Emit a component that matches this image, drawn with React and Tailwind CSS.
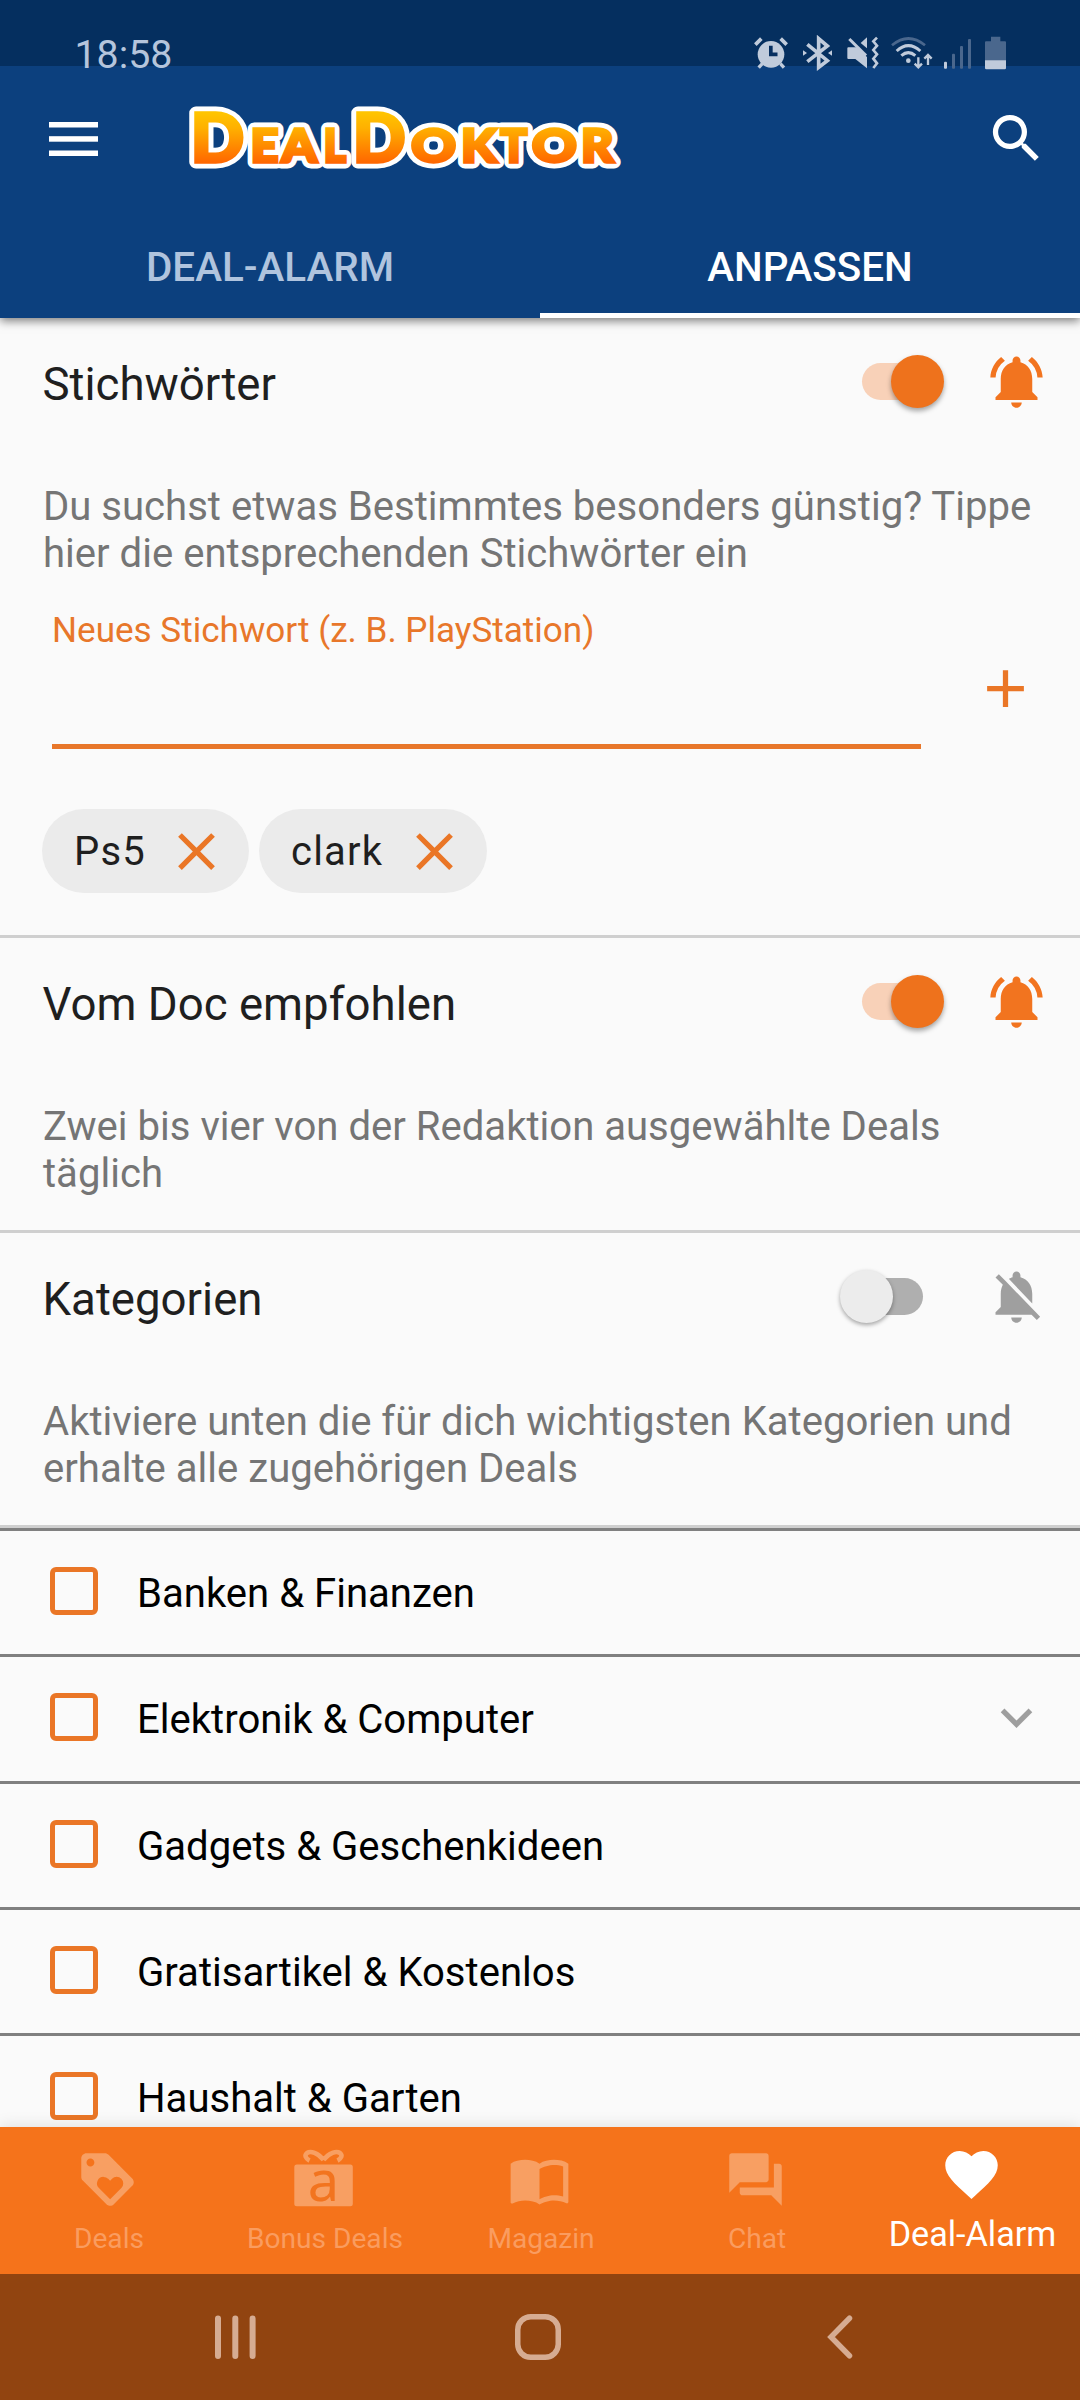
import React from "react";
import {
  MdNotificationsActive,
  MdNotificationsOff,
  MdSearch,
  MdAdd,
  MdClose,
  MdExpandMore,
  MdLoyalty,
  MdImportContacts,
  MdForum,
  MdFavorite,
} from "react-icons/md";

const BRIGHT = "#c0cbdb";
const DIM = "#4a678d";

function StatusGlyph({ x, w, children, className }) {
  return (
    <svg
      width={w / 3}
      height="36"
      viewBox={`${x} 44 ${w} 108`}
      className={className}
      fill="none"
      stroke={BRIGHT}
    >
      {children}
    </svg>
  );
}

function StatusIcons() {
  return (
    <div className="flex h-9">
      <StatusGlyph x={42} w={144}>
        <circle cx="93" cy="102" r="40" fill={BRIGHT} stroke="none" />
        <path d="M67 130 56 142M121 130l11 12" strokeWidth="10" />
        <path d="M46 73 64 55M122 55l18 18" strokeWidth="11" />
        <path d="M92.500 76v26h20" strokeWidth="11" stroke="#062f60" />
      </StatusGlyph>
      <StatusGlyph x={186} w={132}>
        <path d="M202 72 262 121 236 141V55L262 77 202 124" strokeWidth="11" />
        <path d="M189 90l12 8-12 8zM276 90l-12 8 12 8z" fill={BRIGHT} stroke="none" />
      </StatusGlyph>
      <StatusGlyph x={318} w={132}>
        <path d="M322 84q0-3 3-3h24L381 110v34L346 116h-21q-3 0-3-3z" fill={BRIGHT} stroke="none" />
        <path d="M381 51v33L362 68z" fill={BRIGHT} stroke="none" />
        <path d="M328 56 378 106" strokeWidth="9" />
        <path d="M411 52 400 63 411 76 400 89 411 102 400 115 411 129 400 143" strokeWidth="8" />
      </StatusGlyph>
      <StatusGlyph x={450} w={156}>
        <path d="M456 75Q505 34 555 75" strokeWidth="8" stroke={DIM} />
        <path d="M470 92Q505 60 541 92M484 106Q505 88 526 106" strokeWidth="9" />
        <circle cx="505" cy="121" r="7" fill={BRIGHT} stroke="none" />
        <path d="M535 111v28M524 130l11 11 11-11M564 134v-28M553 115l11-11 11 11" strokeWidth="7" />
      </StatusGlyph>
      <StatusGlyph x={606} w={120}>
        <g stroke="none" fill={DIM}>
          <rect x="612" y="124" width="9" height="21" rx="3" fill={BRIGHT} />
          <rect x="636" y="100" width="9" height="45" rx="3" />
          <rect x="660" y="77" width="9" height="68" rx="3" />
          <rect x="684" y="56" width="9" height="89" rx="3" />
        </g>
      </StatusGlyph>
      <StatusGlyph x={726} w={78}>
        <path d="M753 63V49h28v14h14q3 0 3 3v55h-63V66q0-3 3-3z" fill={DIM} stroke="none" />
        <path d="M735 120h63v23q0 4-4 4h-55q-4 0-4-4z" fill={BRIGHT} stroke="none" />
      </StatusGlyph>
    </div>
  );
}

/* letter, left edge, right edge, font size */
const LOGO = [
  ["D", 193.5, 244, 66],
  ["E", 252, 278.7, 45.5],
  ["A", 279.3, 319.3, 45.5],
  ["L", 324.7, 347.3, 45.5],
  ["D", 355.3, 405.3, 66],
  ["O", 411.3, 456, 46.5],
  ["K", 462.7, 499.3, 45.5],
  ["T", 498.7, 528.3, 45.5],
  ["O", 532, 576.7, 46.5],
  ["R", 582.7, 615.5, 45.5],
];

function Logo() {
  const ctx = document.createElement("canvas").getContext("2d");
  const letters = LOGO.map(([char, left, right, size]) => {
    ctx.font = `900 ${size * 10}px Lato`;
    const m = ctx.measureText(char);
    const inkLeft = -m.actualBoundingBoxLeft / 10;
    const ink = m.actualBoundingBoxRight / 10 - inkLeft;
    const sx = (right - left - 3.4) / ink;
    return { char, size, transform: `translate(${left + 1.7 - inkLeft * sx} 162.200) scale(${sx} 1)` };
  });
  const draw = (props) =>
    letters.map((l, i) => (
      <text key={i} transform={l.transform} fontSize={l.size} {...props}>
        {l.char}
      </text>
    ));
  return (
    <svg width="440" height="110" viewBox="185 84 440 110" fontFamily="Lato" fontWeight="900" strokeLinejoin="round">
      <defs>
        <linearGradient id="logoFill" gradientUnits="userSpaceOnUse" x1="0" x2="0" y1="-49" y2="1">
          <stop offset="0" stopColor="#ffc400" />
          <stop offset="0.3" stopColor="#ffb000" />
          <stop offset="1" stopColor="#ff6600" />
        </linearGradient>
      </defs>
      {draw({ fill: "#fff", stroke: "#fff", strokeWidth: 12.8 })}
      {draw({ fill: "url(#logoFill)", stroke: "url(#logoFill)", strokeWidth: 3.4, strokeLinejoin: "miter" })}
    </svg>
  );
}

function Header() {
  return (
    <header className="relative z-10 h-[318px] bg-[#0c407e] bg-[linear-gradient(#052f5f_66px,transparent_66px)] shadow-[0_3px_9px_rgba(0,0,0,0.5)]">
      <div className="flex h-[70px] items-start justify-between pl-[74.5px] pr-[72px]">
        <span className="pt-[30px] text-[39.3px] leading-[50px] text-[#b5c5dc]">18:58</span>
        <div className="pt-[34.700px]">
          <StatusIcons />
        </div>
      </div>
      <div className="flex h-[138px] items-start pl-[48.5px] pr-[32px]">
        <svg width="49" height="34" viewBox="0 0 49 34" className="mt-[52px]" fill="#fff">
          <rect width="49" height="5.500" />
          <rect y="14.200" width="49" height="5.500" />
          <rect y="28.500" width="49" height="5.500" />
        </svg>
        <div className="ml-[87.5px] mt-[14px]">
          <Logo />
        </div>
        <MdSearch className="ml-auto mt-[37px] size-[63px] text-white" />
      </div>
      <nav className="flex h-[110px] text-center text-[40.4px] font-medium leading-[50px]">
        <div className="flex-1 pt-[35px] text-[#b0c4de]">DEAL-ALARM</div>
        <div className="flex-1 border-b-[5px] border-white pt-[35px] text-white">ANPASSEN</div>
      </nav>
    </header>
  );
}

function Toggle({ on }) {
  return (
    <div
      className={
        on
          ? "relative h-[37px] w-[61px] rounded-full bg-[#f8d1b8]"
          : "relative h-[37px] w-[61px] rounded-full bg-[#afafaf]"
      }
    >
      <div
        className={
          on
            ? "absolute -top-2 left-[29px] size-[53px] rounded-full bg-[#ee721c] shadow-[0_3px_5px_rgba(0,0,0,0.35)]"
            : "absolute -top-2 left-[-22px] size-[53px] rounded-full bg-[#ececec] shadow-[0_2px_4px_rgba(0,0,0,0.35)]"
        }
      />
    </div>
  );
}

function Section({ title, text, on, children, className }) {
  return (
    <section className={`border-b-[3px] border-[#cfcfcf] ${className}`}>
      <div className="flex h-[127px] items-center pl-[42.5px] pr-[32px]">
        <h2 className="flex-1 pt-[7px] text-[45.6px] leading-[54px] text-[#1f1f1f]">{title}</h2>
        <Toggle on={on} />
        {on ? (
          <MdNotificationsActive className="ml-[62px] size-[63px] text-[#f2741f]" />
        ) : (
          <MdNotificationsOff className="ml-[62px] size-[63px] text-[#9f9f9f]" />
        )}
      </div>
      <p className="mt-[39px] whitespace-pre-line pl-[43px] text-[40.1px] leading-[46.7px] text-[#757575]">{text}</p>
      {children}
    </section>
  );
}

function Chip({ label, className }) {
  return (
    <div className={`flex h-[84px] items-center justify-between rounded-full bg-[#ebebeb] pl-[32px] pr-[21px] ${className}`}>
      <span className="pt-[1px] text-[40px] leading-[50px] tracking-[1.2px] text-[#1f1f1f]">{label}</span>
      <MdClose className="size-[63px] text-[#ea7626]" />
    </div>
  );
}

const CATEGORIES = [
  { name: "Banken & Finanzen", height: "h-[126px]" },
  { name: "Elektronik & Computer", height: "h-[127px]", expandable: true },
  { name: "Gadgets & Geschenkideen", height: "h-[126px]" },
  { name: "Gratisartikel & Kostenlos", height: "h-[126px]" },
  { name: "Haushalt & Garten", height: "h-[126px]" },
];

function Category({ name, height, expandable }) {
  return (
    <div className={`flex items-center border-t-[3px] border-[#808080] pl-[50px] pr-[32px] ${height}`}>
      <div className="mb-[4px] size-[48px] rounded-[6px] border-[5.5px] border-[#ea7626]" />
      <span className="ml-[39px] flex-1 pt-[2px] text-[40.1px] leading-[48px] text-black">{name}</span>
      {expandable && <MdExpandMore className="mb-[4px] size-[63px] text-[#9e9e9e]" />}
    </div>
  );
}

function GiftIcon() {
  return (
    <svg width="63" height="83" viewBox="0 -10 63 83" className="-mb-[10px] -ml-[1px] -mt-[10px] text-[#f89f62]">
      <rect x="2.300" y="16.500" width="58.500" height="41.800" rx="2.500" fill="currentColor" />
      <path
        d="M31.500 12C26 4.500 18.500 2.600 15 5c-2.800 2.200-1.500 5.500 2.500 7.600M31.500 12C37 4.500 44.500 2.600 48 5c2.800 2.200 1.500 5.500-2.500 7.600"
        fill="none"
        stroke="currentColor"
        strokeWidth="4.600"
      />
      <text x="31.500" y="52.600" textAnchor="middle" fontFamily="Noto Sans" fontSize="56" fill="#f2741f">
        a
      </text>
    </svg>
  );
}

function NavItem({ icon, label }) {
  return (
    <div className="flex w-1/5 flex-col items-center pt-[21px]">
      {icon}
      <span className="ml-[2px] mt-[12px] text-[28.1px] leading-[32px] text-[#fa9c5f]">{label}</span>
    </div>
  );
}

function BottomNav() {
  return (
    <nav className="relative flex h-[147px] shrink-0 bg-[#f5731b] shadow-[0_-2px_14px_rgba(0,0,0,0.1)]">
      <NavItem icon={<MdLoyalty className="-ml-[1px] size-[63px] text-[#f89f62]" />} label="Deals" />
      <NavItem icon={<GiftIcon />} label="Bonus Deals" />
      <NavItem icon={<MdImportContacts className="-ml-[1px] size-[63px] text-[#f89f62]" />} label="Magazin" />
      <NavItem icon={<MdForum className="-ml-[1px] size-[63px] text-[#f89f62]" />} label="Chat" />
      <div className="flex w-1/5 flex-col items-center pt-[16px] text-white">
        <MdFavorite className="-ml-[1px] size-[63px]" />
        <span className="ml-[1px] mt-[8px] text-[34.2px] leading-[40px]">Deal-Alarm</span>
      </div>
    </nav>
  );
}

function SystemBar() {
  return (
    <div className="relative flex h-[126px] shrink-0 items-center bg-[#914410] pl-[214px]">
      <svg width="42" height="44" viewBox="0 0 42 44" fill="none" stroke="#d6ac92" strokeWidth="6" strokeLinecap="round">
        <path d="M4 3.500v37.500M21.300 3.500v37.500M38.600 3.500v37.500" />
      </svg>
      <svg width="46" height="46" viewBox="0 0 46 46" className="ml-[258.5px]" fill="none" stroke="#d6ac92" strokeWidth="5.500">
        <rect x="2.750" y="2.750" width="40.500" height="40.500" rx="13" />
      </svg>
      <svg width="28" height="44" viewBox="0 0 28 44" className="ml-[265.500px]" fill="none" stroke="#d6ac92" strokeWidth="5.500" strokeLinecap="round">
        <path d="M23.500 3.200 5 22 23.500 40.800" />
      </svg>
    </div>
  );
}

export default function App() {
  return (
    <div className="flex h-[2400px] w-[1080px] flex-col overflow-hidden bg-[#fafafa] font-[Roboto,sans-serif]">
      <Header />
      <main className="h-[1809px] shrink-0 overflow-hidden">
        <Section
          title="Stichwörter"
          on
          className="h-[620px]"
          text={"Du suchst etwas Bestimmtes besonders günstig? Tippe\nhier die entsprechenden Stichwörter ein"}
        >
          <div className="mt-[33px] flex h-[139px] items-end pl-[52px]">
            <div className="h-full w-[869px] border-b-[5px] border-[#e8772a]">
              <label className="block text-[35.1px] leading-[41px] text-[#e8772a]">Neues Stichwort (z. B. PlayStation)</label>
            </div>
            <MdAdd className="mb-[29px] ml-[53px] size-[63px] text-[#ea7626]" />
          </div>
          <div className="mt-[60px] flex gap-[10px] pl-[42px]">
            <Chip label="Ps5" className="w-[207px]" />
            <Chip label="clark" className="w-[228px]" />
          </div>
        </Section>
        <Section
          title="Vom Doc empfohlen"
          on
          className="h-[295px]"
          text={"Zwei bis vier von der Redaktion ausgewählte Deals\ntäglich"}
        />
        <Section
          title="Kategorien"
          className="h-[295px]"
          text={"Aktiviere unten die für dich wichtigsten Kategorien und\nerhalte alle zugehörigen Deals"}
        />
        {CATEGORIES.map((c) => (
          <Category key={c.name} {...c} />
        ))}
      </main>
      <BottomNav />
      <SystemBar />
    </div>
  );
}
